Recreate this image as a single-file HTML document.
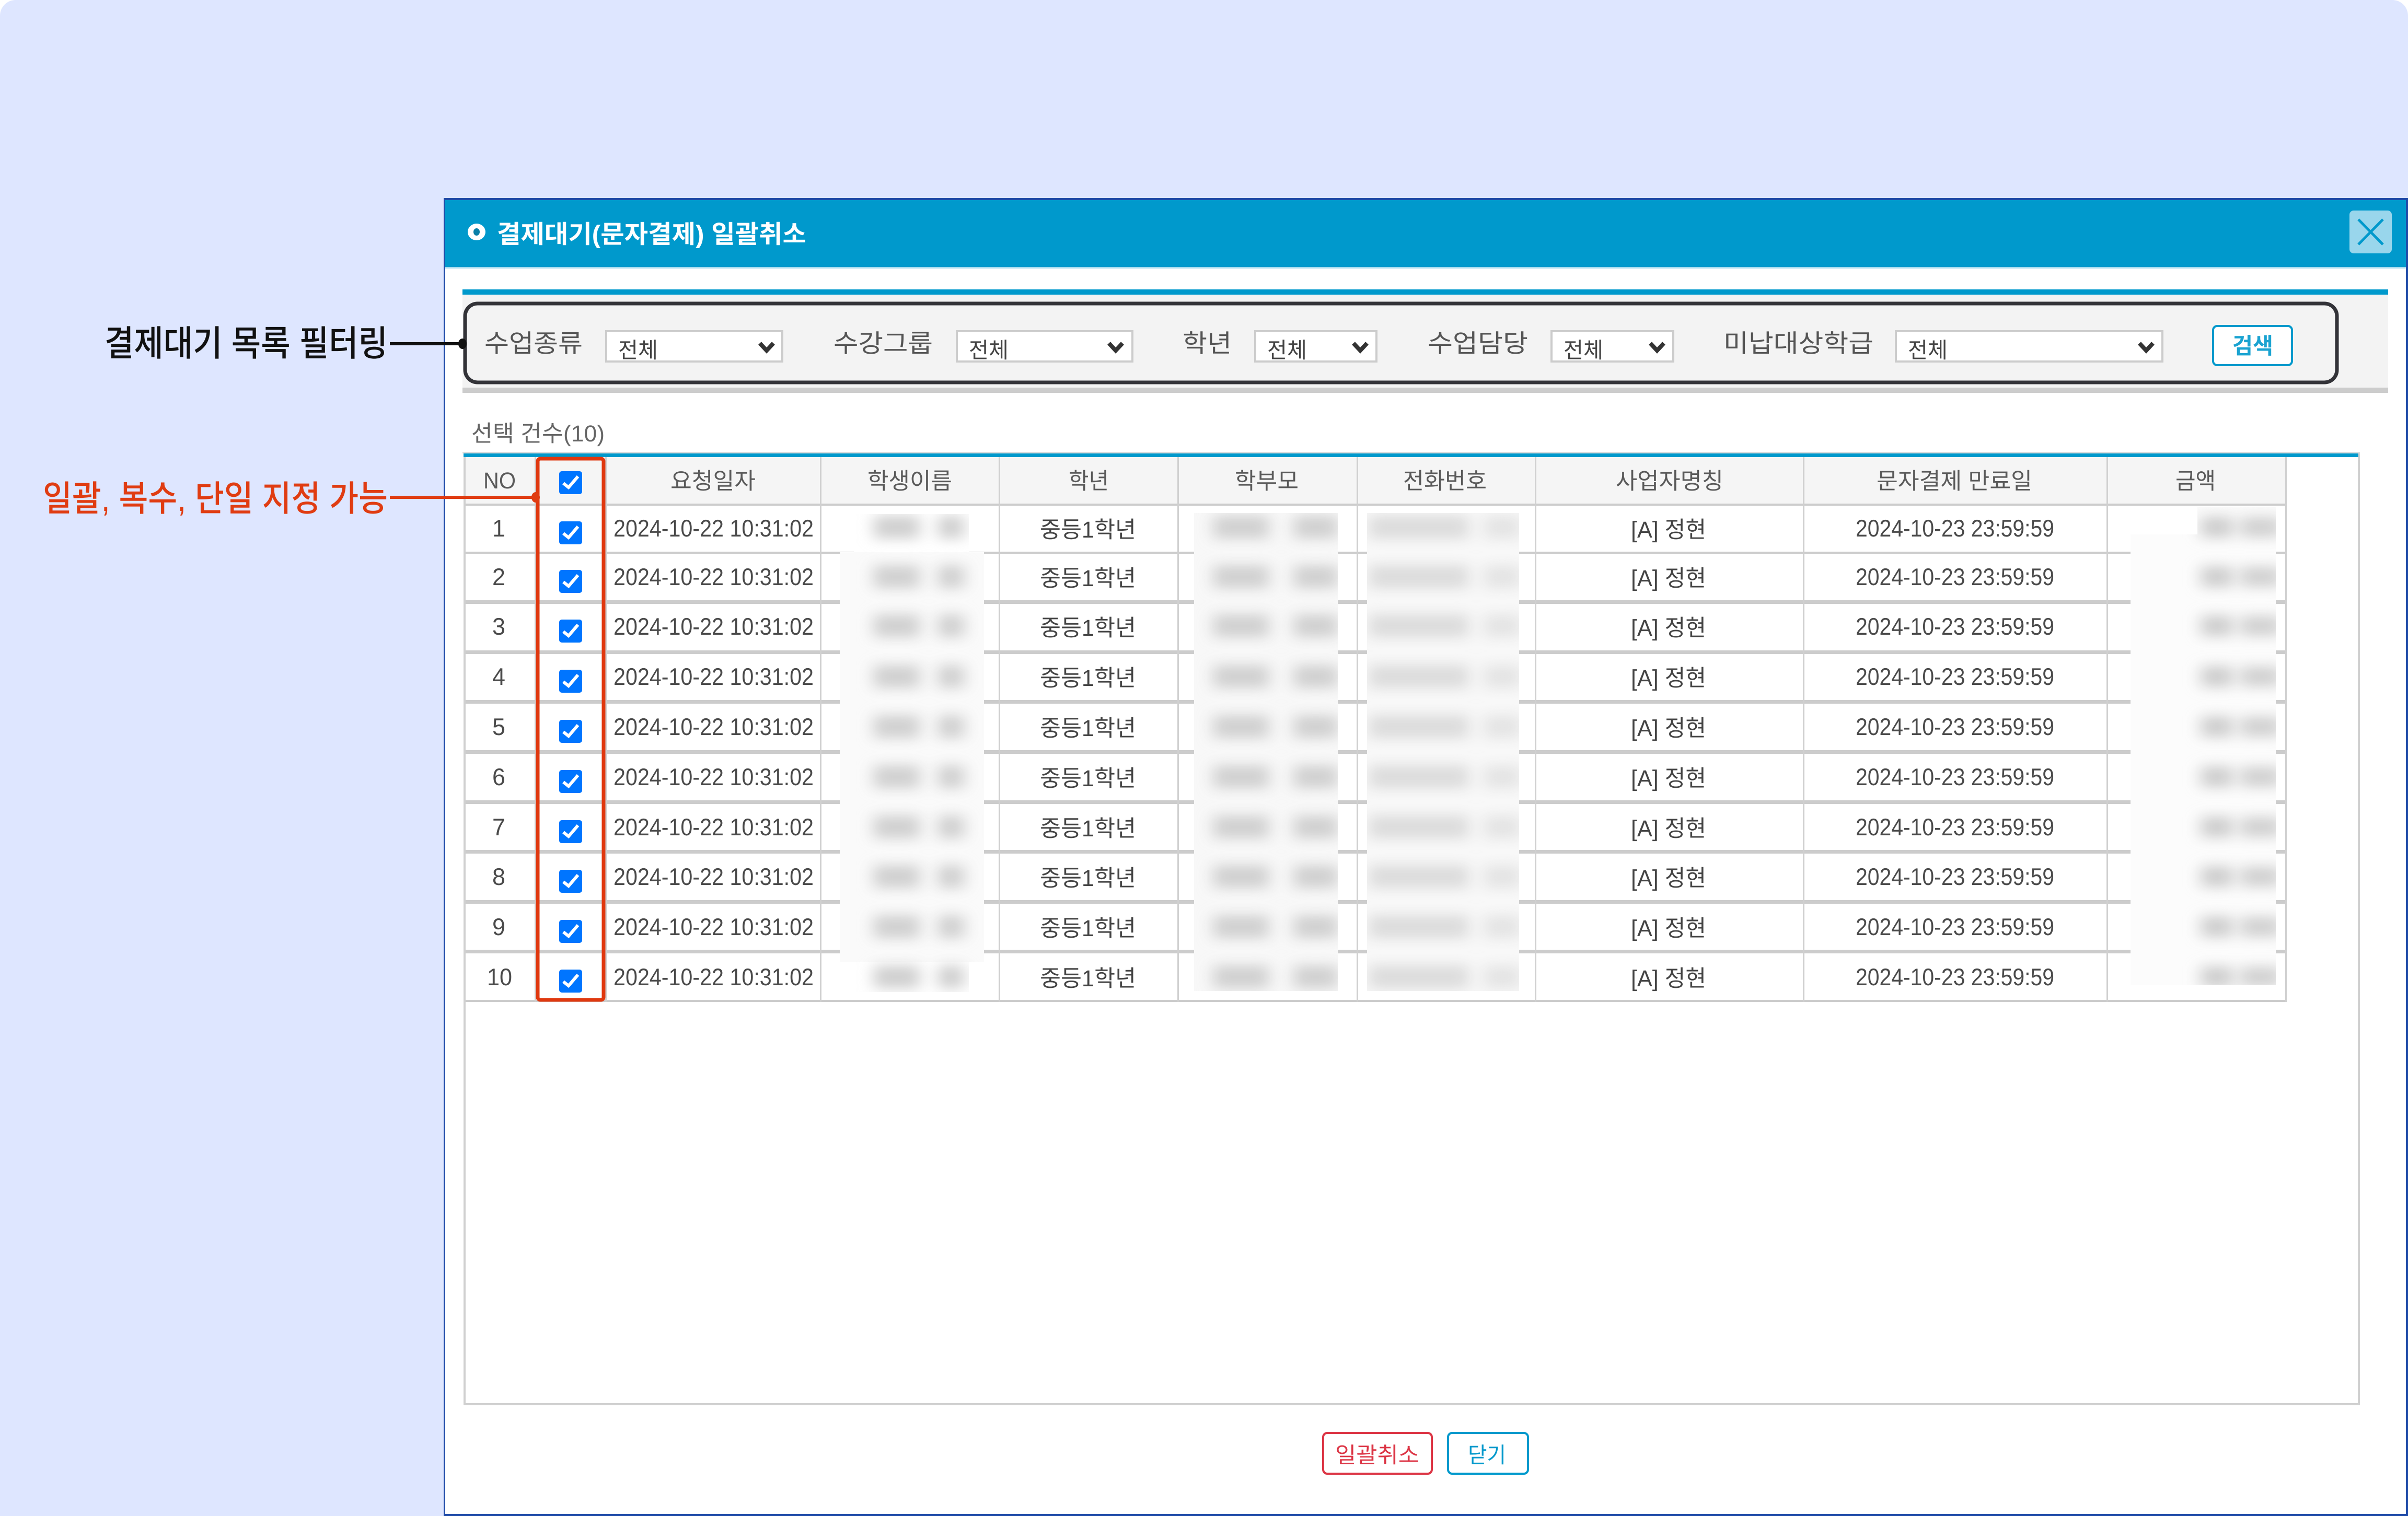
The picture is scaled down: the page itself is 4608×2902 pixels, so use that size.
<!DOCTYPE html>
<html lang="ko">
<head>
<meta charset="utf-8">
<title>결제대기(문자결제) 일괄취소</title>
<style>
html,body{margin:0;padding:0;background:#fff}
svg{display:block}
text{font-family:"Liberation Sans","Noto Sans CJK KR",sans-serif;text-rendering:geometricPrecision}
.n{font-size:46px;fill:#4a4a4a}
.k{font-size:44px;fill:#444}
.l{font-size:48px;fill:#555}
.s{font-size:42px;fill:#444}
.h{font-size:44px;fill:#5a5a5a}
.sel{fill:#fff;stroke:#ccc;stroke-width:4}
.chev{fill:none;stroke:#333;stroke-width:8}
.rl{fill:#ccc}
.cl{fill:#d0d0d0}
</style>
</head>
<body>
<svg xmlns="http://www.w3.org/2000/svg" width="4608" height="2902" viewBox="0 0 4608 2902">
<defs>
<filter id="bl" x="-5%" y="-5%" width="110%" height="110%"><feGaussianBlur stdDeviation="15 12"/></filter>
<clipPath id="blclip">
<rect x="1634" y="984" width="220" height="915"/>
<rect x="1607" y="1057" width="276" height="785"/>
<rect x="2285" y="982" width="275" height="915"/>
<rect x="2616" y="982" width="291" height="915"/>
<rect x="4205" y="970" width="150" height="916"/>
<rect x="4077" y="1023" width="278" height="863"/>
</clipPath>
<g id="blobs">
<rect x="1672" y="-22" width="88" height="44" fill="#d0d0d0"/>
<rect x="1795" y="-22" width="50" height="44" fill="#d0d0d0"/>
<rect x="2322" y="-22" width="106" height="44" fill="#d0d0d0"/>
<rect x="2476" y="-22" width="84" height="44" fill="#d0d0d0"/>
<rect x="2620" y="-22" width="190" height="44" fill="#dcdcdc"/>
<rect x="2840" y="-22" width="70" height="44" fill="#e4e4e4"/>
<rect x="4212" y="-20" width="60" height="40" fill="#cecece"/>
<rect x="4288" y="-20" width="76" height="40" fill="#d2d2d2"/>
</g>
<g id="cb">
<rect x="1070" y="0" width="44" height="44" rx="5" fill="#0075ff"/>
<path d="M1078 23L1088 31L1106 10" fill="none" stroke="#fff" stroke-width="6"/>
</g>
</defs>

<!-- page -->
<rect x="0" y="0" width="4608" height="2902" rx="30" fill="#dee6ff"/>
<rect x="0" y="1000" width="4608" height="1902" fill="#dee6ff"/>

<!-- modal -->
<rect x="849" y="379" width="3759" height="2523" fill="#1f4ba8"/>
<rect x="852" y="383" width="3752" height="2515" fill="#fff"/>
<rect x="852" y="383" width="3752" height="129" fill="#0099cc"/>
<rect x="852" y="511" width="3752" height="3" fill="#a8dcee"/>

<!-- title -->
<ellipse cx="912" cy="444" rx="17" ry="16" fill="#fff"/>
<ellipse cx="912" cy="444" rx="6" ry="7" fill="#0a7fa8"/>
<text x="951" y="465" font-size="48" font-weight="700" fill="#fff" textLength="592" lengthAdjust="spacingAndGlyphs">결제대기(문자결제) 일괄취소</text>
<rect x="4496" y="403" width="81" height="82" rx="8" fill="#99d6ec"/>
<path d="M4513 420L4560 468M4560 420L4513 468" stroke="#0099cc" stroke-width="5" fill="none"/>

<!-- filter panel -->
<rect x="885" y="554" width="3685" height="10" fill="#0099cc"/>
<rect x="885" y="564" width="3685" height="178" fill="#f3f3f3"/>
<rect x="885" y="742" width="3685" height="10" fill="#ccc"/>
<rect x="890" y="581" width="3582" height="151" rx="24" fill="none" stroke="#333338" stroke-width="7"/>

<text class="l" x="927" y="674" textLength="188" lengthAdjust="spacingAndGlyphs">수업종류</text>
<rect class="sel" x="1160" y="634" width="337" height="58"/>
<text class="s" x="1183" y="685" textLength="76" lengthAdjust="spacingAndGlyphs">전체</text>
<path class="chev" d="M1454 657L1467 671L1480 657"/>

<text class="l" x="1595" y="674" textLength="190" lengthAdjust="spacingAndGlyphs">수강그룹</text>
<rect class="sel" x="1831" y="634" width="336" height="58"/>
<text class="s" x="1854" y="685" textLength="76" lengthAdjust="spacingAndGlyphs">전체</text>
<path class="chev" d="M2122 657L2135 671L2148 657"/>

<text class="l" x="2263" y="674" textLength="94" lengthAdjust="spacingAndGlyphs">학년</text>
<rect class="sel" x="2402" y="634" width="232" height="58"/>
<text class="s" x="2425" y="685" textLength="76" lengthAdjust="spacingAndGlyphs">전체</text>
<path class="chev" d="M2590 657L2603 671L2616 657"/>

<text class="l" x="2732" y="674" textLength="192" lengthAdjust="spacingAndGlyphs">수업담당</text>
<rect class="sel" x="2969" y="634" width="233" height="58"/>
<text class="s" x="2992" y="685" textLength="76" lengthAdjust="spacingAndGlyphs">전체</text>
<path class="chev" d="M3158 657L3171 671L3184 657"/>

<text class="l" x="3298" y="674" textLength="287" lengthAdjust="spacingAndGlyphs">미납대상학급</text>
<rect class="sel" x="3628" y="634" width="510" height="58"/>
<text class="s" x="3651" y="685" textLength="76" lengthAdjust="spacingAndGlyphs">전체</text>
<path class="chev" d="M4094 657L4107 671L4120 657"/>

<rect x="4235" y="624" width="151" height="75" rx="8" fill="#fff" stroke="#0099cc" stroke-width="4"/>
<text x="4272" y="677" font-size="43" font-weight="700" fill="#1aa3d1" textLength="78" lengthAdjust="spacingAndGlyphs">검색</text>

<!-- selected count -->
<text x="902" y="845" font-size="44" fill="#666" textLength="255" lengthAdjust="spacingAndGlyphs">선택 건수(10)</text>

<!-- list panel -->
<rect x="885" y="865" width="3631" height="3" fill="#ddd"/>
<rect x="887" y="868" width="4" height="1822" fill="#d0d0d0"/>
<rect x="4512" y="868" width="4" height="1822" fill="#d0d0d0"/>
<rect x="887" y="2686" width="3629" height="4" fill="#d0d0d0"/>
<rect x="887" y="868" width="3626" height="7" fill="#0099cc"/>

<!-- table -->
<rect x="888" y="875" width="3487" height="90" fill="#f5f5f5"/>
<rect class="rl" x="888" y="964" width="3487" height="4"/>
<rect class="rl" x="888" y="1056" width="3487" height="4"/>
<rect class="rl" x="888" y="1149" width="3487" height="7"/>
<rect class="rl" x="888" y="1245" width="3487" height="7"/>
<rect class="rl" x="888" y="1340" width="3487" height="7"/>
<rect class="rl" x="888" y="1436" width="3487" height="7"/>
<rect class="rl" x="888" y="1532" width="3487" height="7"/>
<rect class="rl" x="888" y="1627" width="3487" height="7"/>
<rect class="rl" x="888" y="1723" width="3487" height="7"/>
<rect class="rl" x="888" y="1818" width="3487" height="7"/>
<rect class="rl" x="888" y="1914" width="3487" height="4"/>
<rect class="cl" x="888" y="875" width="3" height="1043"/>
<rect class="cl" x="1023" y="875" width="3" height="1043"/>
<rect class="cl" x="1158" y="875" width="3" height="1043"/>
<rect class="cl" x="1569" y="875" width="3" height="1043"/>
<rect class="cl" x="1911" y="875" width="3" height="1043"/>
<rect class="cl" x="2253" y="875" width="3" height="1043"/>
<rect class="cl" x="2596" y="875" width="3" height="1043"/>
<rect class="cl" x="2937" y="875" width="3" height="1043"/>
<rect class="cl" x="3450" y="875" width="3" height="1043"/>
<rect class="cl" x="4031" y="875" width="3" height="1043"/>
<rect class="cl" x="4373" y="875" width="3" height="1043"/>

<!-- header -->
<text class="h" x="925" y="935" textLength="62" lengthAdjust="spacingAndGlyphs">NO</text>
<text class="h" x="1283" y="936" textLength="163" lengthAdjust="spacingAndGlyphs">요청일자</text>
<text class="h" x="1660" y="936" textLength="162" lengthAdjust="spacingAndGlyphs">학생이름</text>
<text class="h" x="2045" y="936" textLength="77" lengthAdjust="spacingAndGlyphs">학년</text>
<text class="h" x="2363" y="936" textLength="122" lengthAdjust="spacingAndGlyphs">학부모</text>
<text class="h" x="2685" y="936" textLength="160" lengthAdjust="spacingAndGlyphs">전화번호</text>
<text class="h" x="3092" y="936" textLength="206" lengthAdjust="spacingAndGlyphs">사업자명칭</text>
<text class="h" x="3591" y="936" textLength="298" lengthAdjust="spacingAndGlyphs">문자결제 만료일</text>
<text class="h" x="4163" y="936" textLength="77" lengthAdjust="spacingAndGlyphs">금액</text>
<use href="#cb" y="902"/>

<!-- rows -->
<g transform="translate(0,967)">
<text class="n" x="942" y="60" textLength="25" lengthAdjust="spacingAndGlyphs">1</text>
<use href="#cb" y="31"/>
<text class="n" x="1174" y="60" textLength="383" lengthAdjust="spacingAndGlyphs">2024-10-22 10:31:02</text>
<text class="k" x="1990" y="62" textLength="184" lengthAdjust="spacingAndGlyphs">중등1학년</text>
<text class="k" x="3121" y="62" textLength="144" lengthAdjust="spacingAndGlyphs">[A] 정현</text>
<text class="n" x="3551" y="60" textLength="380" lengthAdjust="spacingAndGlyphs">2024-10-23 23:59:59</text>
</g>
<g transform="translate(0,1060)">
<text class="n" x="942" y="60" textLength="25" lengthAdjust="spacingAndGlyphs">2</text>
<use href="#cb" y="31"/>
<text class="n" x="1174" y="60" textLength="383" lengthAdjust="spacingAndGlyphs">2024-10-22 10:31:02</text>
<text class="k" x="1990" y="62" textLength="184" lengthAdjust="spacingAndGlyphs">중등1학년</text>
<text class="k" x="3121" y="62" textLength="144" lengthAdjust="spacingAndGlyphs">[A] 정현</text>
<text class="n" x="3551" y="60" textLength="380" lengthAdjust="spacingAndGlyphs">2024-10-23 23:59:59</text>
</g>
<g transform="translate(0,1155)">
<text class="n" x="942" y="60" textLength="25" lengthAdjust="spacingAndGlyphs">3</text>
<use href="#cb" y="31"/>
<text class="n" x="1174" y="60" textLength="383" lengthAdjust="spacingAndGlyphs">2024-10-22 10:31:02</text>
<text class="k" x="1990" y="62" textLength="184" lengthAdjust="spacingAndGlyphs">중등1학년</text>
<text class="k" x="3121" y="62" textLength="144" lengthAdjust="spacingAndGlyphs">[A] 정현</text>
<text class="n" x="3551" y="60" textLength="380" lengthAdjust="spacingAndGlyphs">2024-10-23 23:59:59</text>
</g>
<g transform="translate(0,1251)">
<text class="n" x="942" y="60" textLength="25" lengthAdjust="spacingAndGlyphs">4</text>
<use href="#cb" y="31"/>
<text class="n" x="1174" y="60" textLength="383" lengthAdjust="spacingAndGlyphs">2024-10-22 10:31:02</text>
<text class="k" x="1990" y="62" textLength="184" lengthAdjust="spacingAndGlyphs">중등1학년</text>
<text class="k" x="3121" y="62" textLength="144" lengthAdjust="spacingAndGlyphs">[A] 정현</text>
<text class="n" x="3551" y="60" textLength="380" lengthAdjust="spacingAndGlyphs">2024-10-23 23:59:59</text>
</g>
<g transform="translate(0,1347)">
<text class="n" x="942" y="60" textLength="25" lengthAdjust="spacingAndGlyphs">5</text>
<use href="#cb" y="31"/>
<text class="n" x="1174" y="60" textLength="383" lengthAdjust="spacingAndGlyphs">2024-10-22 10:31:02</text>
<text class="k" x="1990" y="62" textLength="184" lengthAdjust="spacingAndGlyphs">중등1학년</text>
<text class="k" x="3121" y="62" textLength="144" lengthAdjust="spacingAndGlyphs">[A] 정현</text>
<text class="n" x="3551" y="60" textLength="380" lengthAdjust="spacingAndGlyphs">2024-10-23 23:59:59</text>
</g>
<g transform="translate(0,1443)">
<text class="n" x="942" y="60" textLength="25" lengthAdjust="spacingAndGlyphs">6</text>
<use href="#cb" y="31"/>
<text class="n" x="1174" y="60" textLength="383" lengthAdjust="spacingAndGlyphs">2024-10-22 10:31:02</text>
<text class="k" x="1990" y="62" textLength="184" lengthAdjust="spacingAndGlyphs">중등1학년</text>
<text class="k" x="3121" y="62" textLength="144" lengthAdjust="spacingAndGlyphs">[A] 정현</text>
<text class="n" x="3551" y="60" textLength="380" lengthAdjust="spacingAndGlyphs">2024-10-23 23:59:59</text>
</g>
<g transform="translate(0,1539)">
<text class="n" x="942" y="60" textLength="25" lengthAdjust="spacingAndGlyphs">7</text>
<use href="#cb" y="31"/>
<text class="n" x="1174" y="60" textLength="383" lengthAdjust="spacingAndGlyphs">2024-10-22 10:31:02</text>
<text class="k" x="1990" y="62" textLength="184" lengthAdjust="spacingAndGlyphs">중등1학년</text>
<text class="k" x="3121" y="62" textLength="144" lengthAdjust="spacingAndGlyphs">[A] 정현</text>
<text class="n" x="3551" y="60" textLength="380" lengthAdjust="spacingAndGlyphs">2024-10-23 23:59:59</text>
</g>
<g transform="translate(0,1634)">
<text class="n" x="942" y="60" textLength="25" lengthAdjust="spacingAndGlyphs">8</text>
<use href="#cb" y="31"/>
<text class="n" x="1174" y="60" textLength="383" lengthAdjust="spacingAndGlyphs">2024-10-22 10:31:02</text>
<text class="k" x="1990" y="62" textLength="184" lengthAdjust="spacingAndGlyphs">중등1학년</text>
<text class="k" x="3121" y="62" textLength="144" lengthAdjust="spacingAndGlyphs">[A] 정현</text>
<text class="n" x="3551" y="60" textLength="380" lengthAdjust="spacingAndGlyphs">2024-10-23 23:59:59</text>
</g>
<g transform="translate(0,1730)">
<text class="n" x="942" y="60" textLength="25" lengthAdjust="spacingAndGlyphs">9</text>
<use href="#cb" y="31"/>
<text class="n" x="1174" y="60" textLength="383" lengthAdjust="spacingAndGlyphs">2024-10-22 10:31:02</text>
<text class="k" x="1990" y="62" textLength="184" lengthAdjust="spacingAndGlyphs">중등1학년</text>
<text class="k" x="3121" y="62" textLength="144" lengthAdjust="spacingAndGlyphs">[A] 정현</text>
<text class="n" x="3551" y="60" textLength="380" lengthAdjust="spacingAndGlyphs">2024-10-23 23:59:59</text>
</g>
<g transform="translate(0,1826)">
<text class="n" x="932" y="60" textLength="48" lengthAdjust="spacingAndGlyphs">10</text>
<use href="#cb" y="30"/>
<text class="n" x="1174" y="60" textLength="383" lengthAdjust="spacingAndGlyphs">2024-10-22 10:31:02</text>
<text class="k" x="1990" y="62" textLength="184" lengthAdjust="spacingAndGlyphs">중등1학년</text>
<text class="k" x="3121" y="62" textLength="144" lengthAdjust="spacingAndGlyphs">[A] 정현</text>
<text class="n" x="3551" y="60" textLength="380" lengthAdjust="spacingAndGlyphs">2024-10-23 23:59:59</text>
</g>

<!-- blurred personal data -->
<rect x="1634" y="984" width="220" height="915" fill="#fff"/>
<rect x="1607" y="1057" width="276" height="785" fill="#fafafa"/>
<rect x="2285" y="982" width="275" height="915" fill="#f8f8f8"/>
<rect x="2616" y="982" width="291" height="915" fill="#f8f8f8"/>
<rect x="4205" y="970" width="150" height="916" fill="#fbfbfb"/>
<rect x="4077" y="1023" width="278" height="863" fill="#fcfcfc"/>
<g clip-path="url(#blclip)" filter="url(#bl)">
<use href="#blobs" y="1009"/>
<use href="#blobs" y="1104"/>
<use href="#blobs" y="1198"/>
<use href="#blobs" y="1295"/>
<use href="#blobs" y="1391"/>
<use href="#blobs" y="1487"/>
<use href="#blobs" y="1583"/>
<use href="#blobs" y="1678"/>
<use href="#blobs" y="1774"/>
<use href="#blobs" y="1870"/>
</g>

<!-- red highlight box -->
<rect x="1029" y="878" width="126" height="1036" rx="5" fill="none" stroke="#e0380f" stroke-width="7"/>

<!-- annotations -->
<text x="200" y="681" font-size="68" font-weight="500" fill="#111" textLength="542" lengthAdjust="spacingAndGlyphs">결제대기 목록 필터링</text>
<rect x="746" y="655" width="139" height="6" fill="#111"/>
<ellipse cx="885" cy="658" rx="8" ry="10" fill="#111"/>
<text x="82" y="978" font-size="68" font-weight="500" fill="#e03c12" textLength="660" lengthAdjust="spacingAndGlyphs">일괄, 복수, 단일 지정 가능</text>
<rect x="746" y="949" width="279" height="6" fill="#e03c12"/>
<ellipse cx="1025" cy="952" rx="8" ry="10" fill="#e03c12"/>

<!-- footer buttons -->
<rect x="2532" y="2743" width="208" height="78" rx="8" fill="#fff" stroke="#dc3545" stroke-width="4"/>
<text x="2555" y="2800" font-size="42" fill="#dc3545" textLength="161" lengthAdjust="spacingAndGlyphs">일괄취소</text>
<rect x="2771" y="2743" width="153" height="78" rx="8" fill="#fff" stroke="#0099cc" stroke-width="4"/>
<text x="2809" y="2800" font-size="42" fill="#0099cc" textLength="73" lengthAdjust="spacingAndGlyphs">닫기</text>
</svg>
</body>
</html>
